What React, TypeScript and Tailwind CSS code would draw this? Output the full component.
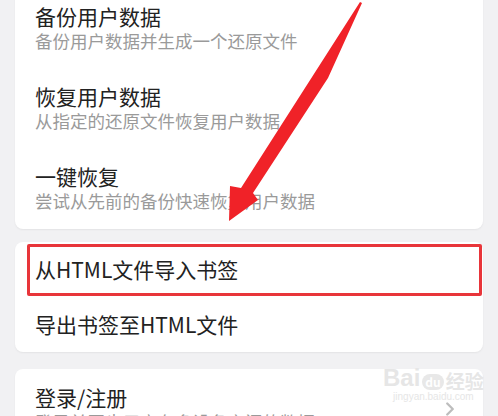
import { ChevronRight } from "lucide-react";

const font = { fontFamily: '"Noto Sans CJK SC", "Noto Sans", sans-serif' };

function Row({ title, desc }: { title: string; desc?: string }) {
  return (
    <div className="px-5 py-[15px]">
      <div className="text-[21px] leading-[26px] text-[#222]">{title}</div>
      {desc && <div className="text-[17.5px] leading-[24px] text-[#9a9a9a]">{desc}</div>}
    </div>
  );
}

export default function App() {
  return (
    <div className="relative w-[498px] h-[416px] overflow-hidden bg-[#f1f1f3]" style={font}>
      <div className="flex flex-col px-[15px] -mt-[13px]">
        {/* backup section */}
        <div className="bg-white rounded-lg shadow-[0_1px_2px_rgba(0,0,0,0.06)] py-px">
          <Row title="备份用户数据" desc="备份用户数据并生成一个还原文件" />
          <Row title="恢复用户数据" desc="从指定的还原文件恢复用户数据" />
          <Row title="一键恢复" desc="尝试从先前的备份快速恢复用户数据" />
        </div>

        {/* bookmarks */}
        <div className="relative mt-[13px] bg-white rounded-lg shadow-[0_1px_2px_rgba(0,0,0,0.06)]">
          <div className="h-[55px] flex items-center px-5 text-[21px] text-[#222]">从HTML文件导入书签</div>
          <div className="h-[55px] flex items-center px-5 text-[21px] text-[#222]">导出书签至HTML文件</div>
          <div className="absolute left-[12px] right-[1px] top-[2px] h-[52px] border-[3px] border-[#e8353a] rounded-[2px]" />
        </div>

        {/* account */}
        <div className="relative mt-[17px] bg-white rounded-lg shadow-[0_1px_2px_rgba(0,0,0,0.06)] h-[80px]">
          <div className="px-5 pt-[15px]">
            <div className="text-[21px] leading-[26px] text-[#222]">登录/注册</div>
            <div className="text-[17.5px] leading-[24px] text-[#9a9a9a]">登录并同步用户在多设备之间的数据</div>
          </div>
          <ChevronRight className="absolute right-[22px] top-[29px] w-[22px] h-[22px] text-[#bdbdbd]" strokeWidth={2.5} />
        </div>
      </div>

      {/* watermark */}
      <div className="absolute left-[383px] top-[366px] flex flex-col items-center text-[#e6e6e6] pointer-events-none">
        <div className="flex items-end gap-[2px]">
          <span className="text-[24px] font-bold leading-none" style={{ fontFamily: '"Liberation Sans", sans-serif' }}>Bai</span>
          <span className="rounded-full bg-[#e8e8e8] text-white text-[12px] font-bold px-[3px] leading-[16px]">du</span>
          <span className="text-[19px] font-bold leading-none">经验</span>
        </div>
        <span className="text-[10px] leading-[14px]" style={{ fontFamily: '"Liberation Sans", sans-serif' }}>jingyan.baidu.com</span>
      </div>

      {/* red arrow */}
      <svg className="absolute inset-0 pointer-events-none" width="498" height="416" viewBox="0 0 498 416">
        <polygon
          points="360,2 362,3 328,78 253,193 258,200 229,221 230,186 241,188"
          fill="#f02228"
        />
      </svg>
    </div>
  );
}
